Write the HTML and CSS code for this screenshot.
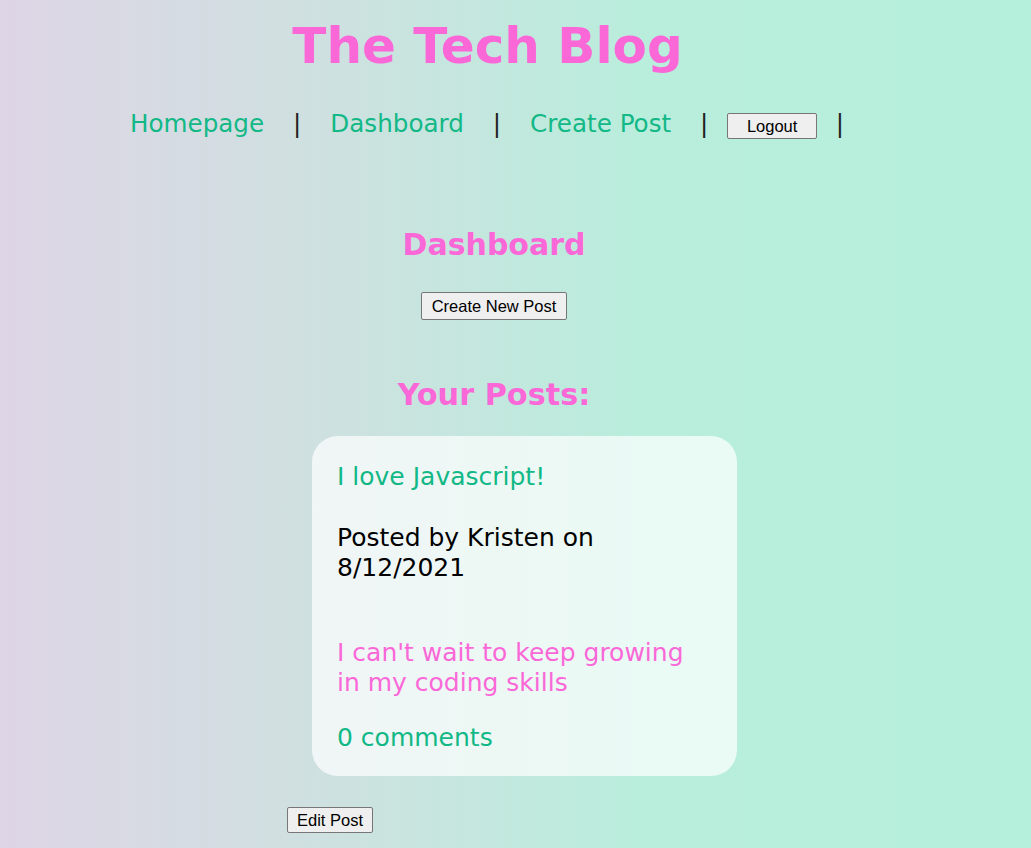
FILE: index.html
```html
<!DOCTYPE html>
<html lang="en">
<head>
<meta charset="utf-8">
<title>The Tech Blog</title>
<link rel="stylesheet" href="styles.css">
</head>
<body>
<header class="site-header">
  <h1 class="site-title">The Tech Blog</h1>
  <nav class="nav">
    <a class="nav-link" href="#">Homepage</a>
    <span class="sep">|</span>
    <a class="nav-link" href="#">Dashboard</a>
    <span class="sep">|</span>
    <a class="nav-link" href="#">Create Post</a>
    <span class="sep">|</span>
    <button class="btn btn-logout" type="button">Logout</button>
    <span class="sep">|</span>
  </nav>
</header>
<main class="main">
  <h2 class="heading heading-dash">Dashboard</h2>
  <div class="center-row">
    <button class="btn btn-create" type="button">Create New Post</button>
  </div>
  <h2 class="heading heading-posts">Your Posts:</h2>
  <article class="card">
    <h3 class="card-title">I love Javascript!</h3>
    <p class="card-meta">Posted by Kristen on 8/12/2021</p>
    <p class="card-body">I can't wait to keep growing in my coding skills</p>
    <p class="card-comments">0 comments</p>
  </article>
  <button class="btn btn-edit" type="button">Edit Post</button>
</main>
</body>
</html>
```
FILE: styles.css
```css
html, body {
  margin: 0;
  padding: 0;
}
body {
  min-height: 848px;
  font-family: "DejaVu Sans", Verdana, sans-serif;
  background: linear-gradient(to right, #ded5e6 0%, #cfe0e0 30%, #b9eddc 62%, #b5f0dc 100%);
  background-attachment: fixed;
}
.site-header {
  padding-top: 16px;
}
.site-title {
  margin: 0;
  padding-right: 56px;
  text-align: center;
  font-size: 50px;
  line-height: 60px;
  font-weight: bold;
  color: #fa68d8;
}
.nav {
  display: flex;
  align-items: baseline;
  gap: 19px;
  margin-top: 33px;
  padding-left: 120px;
  font-size: 24.6px;
  line-height: 30px;
}
.nav-link {
  padding: 0 10px;
  color: #12b886;
  text-decoration: none;
}
.sep {
  color: #222;
}
.btn {
  font-family: "Liberation Sans", Arial, sans-serif;
  font-size: 16.5px;
  line-height: 18px;
  color: #000;
  background: #efefef;
  border: 1px solid #767676;
  border-radius: 2px;
}
.btn-logout {
  padding: 3px 18.5px;
}
.btn-create {
  padding: 4px 10px;
}
.btn-edit {
  padding: 3px 9px;
}
.main {
  width: 414px;
  margin-left: 287px;
  margin-top: 88px;
}
.heading {
  margin: 0;
  text-align: center;
  font-size: 30px;
  line-height: 36px;
  font-weight: bold;
  color: #fa68d8;
}
.heading-posts {
  margin-top: 57px;
  font-size: 30.3px;
}
.center-row {
  display: flex;
  justify-content: center;
  margin-top: 29px;
}
.card {
  box-sizing: border-box;
  width: 425px;
  margin: 23px 0 0 25px;
  padding: 26px 25px 23px;
  border-radius: 26px;
  background: rgba(255, 255, 255, 0.7);
  font-size: 25px;
  line-height: 30px;
}
.card p, .card h3 {
  margin: 0;
}
.card-title {
  font-weight: normal;
  font-size: 25px;
  color: #12b886;
}
.card .card-meta {
  margin-top: 31px;
  color: #000;
}
.card .card-body {
  margin-top: 55px;
  color: #fa68d8;
}
.card .card-comments {
  margin-top: 25px;
  color: #12b886;
}
.btn-edit {
  display: block;
  margin-top: 31px;
}
```
